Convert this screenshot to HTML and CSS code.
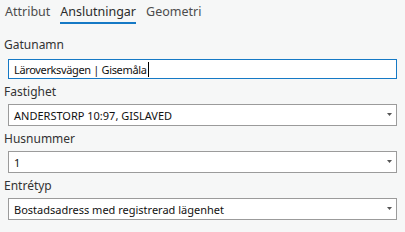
FILE: index.html
```html
<!DOCTYPE html>
<html lang="sv">
<head>
<meta charset="utf-8">
<title>Anslutningar</title>
<link rel="stylesheet" href="styles.css">
</head>
<body>
<div class="panel">
  <nav class="tabs">
    <span class="tab">Attribut</span>
    <span class="tab active">Anslutningar</span>
    <span class="tab">Geometri</span>
  </nav>
  <form class="form">
    <div class="field">
      <label class="label">Gatunamn</label>
      <div class="box input focused"><span class="value">Läroverksvägen | Gisemåla</span><span class="caret"></span></div>
    </div>
    <div class="field">
      <label class="label">Fastighet</label>
      <div class="box select"><span class="value">ANDERSTORP 10:97, GISLAVED</span><svg class="arrow" width="5" height="3" viewBox="0 0 5 3"><polygon points="0,0 5,0 2.5,3" fill="#555"/></svg></div>
    </div>
    <div class="field">
      <label class="label">Husnummer</label>
      <div class="box select"><span class="value">1</span><svg class="arrow" width="5" height="3" viewBox="0 0 5 3"><polygon points="0,0 5,0 2.5,3" fill="#555"/></svg></div>
    </div>
    <div class="field">
      <label class="label">Entrétyp</label>
      <div class="box select"><span class="value">Bostadsadress med registrerad lägenhet</span><svg class="arrow" width="5" height="3" viewBox="0 0 5 3"><polygon points="0,0 5,0 2.5,3" fill="#555"/></svg></div>
    </div>
  </form>
</div>
</body>
</html>
```
FILE: styles.css
```css
html, body {
  margin: 0;
  padding: 0;
  background: #f6f7f7;
}
body {
  font-family: "Noto Sans", "Open Sans", sans-serif;
  color: #222;
}
.panel {
  width: 405px;
  height: 232px;
  box-sizing: border-box;
}
.tabs {
  display: flex;
  gap: 10px;
  padding: 3px 0 0 5px;
}
.tab {
  font-size: 12.5px;
  line-height: 17px;
  padding-bottom: 2px;
  border-bottom: 2px solid transparent;
  color: #4c4c4c;
}
.tab.active {
  color: #2b2b2b;
  border-bottom-color: #1579c5;
}
.form {
  display: flex;
  flex-direction: column;
  gap: 5px;
  padding: 13px 8px 0 8px;
}
.field {
  display: flex;
  flex-direction: column;
  gap: 4px;
}
.label {
  margin-left: -4px;
  font-size: 12px;
  line-height: 16px;
  color: #333;
}
.box {
  display: flex;
  align-items: center;
  box-sizing: border-box;
  height: 22px;
  padding: 0 4px 0 5px;
  background: #fff;
  border: 1px solid #9b9b9b;
  font-size: 11px;
  color: #111;
}
.box.input {
  height: 20px;
  margin-top: 2px;
  border-color: #1579c5;
}
.input .value {
  letter-spacing: -0.35px;
}
.value {
  flex: 0 1 auto;
  white-space: nowrap;
}
.caret {
  width: 1px;
  height: 15px;
  margin-left: 1px;
  background: #000;
}
.arrow {
  margin-left: auto;
  margin-bottom: 2px;
  flex: none;
}
```
